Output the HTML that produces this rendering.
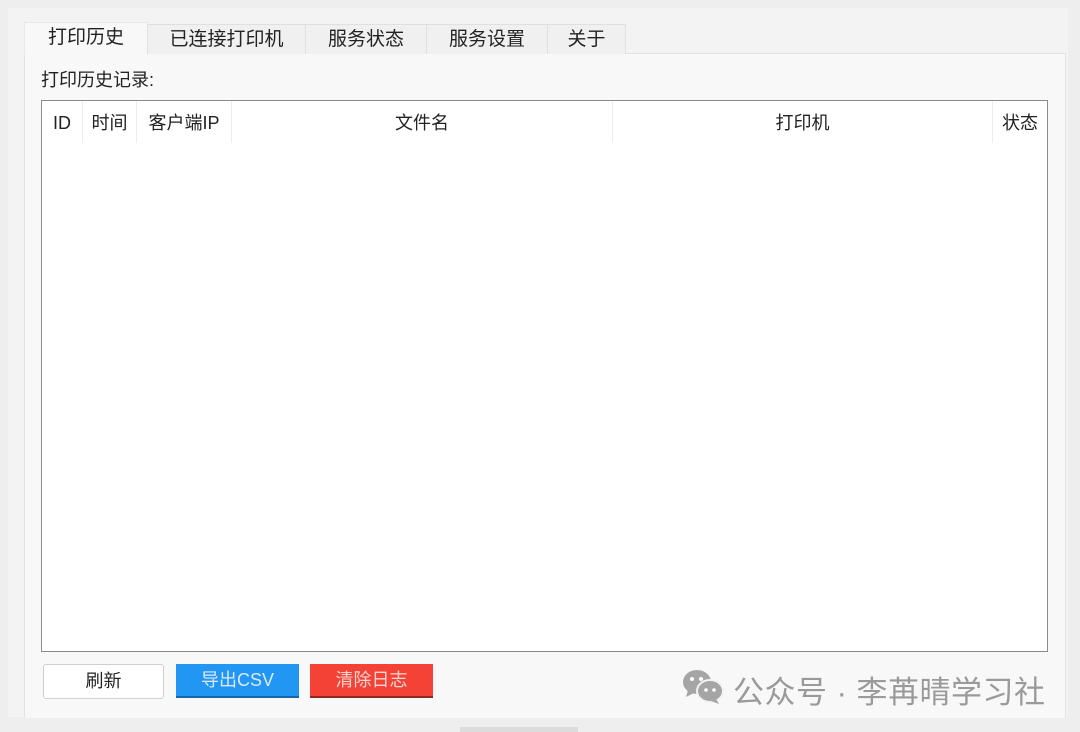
<!DOCTYPE html>
<html><head><meta charset="utf-8"><style>
body{margin:0;width:1080px;height:732px;background:#eeeeee;font-family:"Liberation Sans","Noto Sans CJK SC",sans-serif;position:relative;overflow:hidden;color:#111}
.abs{position:absolute}
.panel{left:8px;top:8px;width:1060px;height:709px;background:#f3f3f3}
.page{left:24px;top:53px;width:1040px;height:664px;background:#f8f8f8;border:1px solid #e2e2e2;border-bottom:none}
.tab{top:24px;height:29px;background:#f0f0f0;border:1px solid #e0e0e0;border-bottom:none;font-size:19px;line-height:29px;text-align:center;color:#222}
.tbl{left:41px;top:100px;width:1005px;height:550px;background:#fff;border:1px solid #8a8a8a}
.th{top:0;height:42px;line-height:44px;font-size:18px;text-align:center;border-right:1px solid #ececec;color:#222}
.btn{top:664px;height:33px;font-size:18px;line-height:33px;text-align:center}
</style></head><body>
<div class="abs panel"></div>
<div class="abs page"></div>
<div class="abs tab" style="left:24px;width:122px;background:#f8f8f8;border-color:#e8e8e8;top:22px;height:32px">打印历史</div>
<div class="abs tab" style="left:147px;width:157px">已连接打印机</div>
<div class="abs tab" style="left:305px;width:120px">服务状态</div>
<div class="abs tab" style="left:426px;width:120px">服务设置</div>
<div class="abs tab" style="left:547px;width:77px">关于</div>
<div class="abs" style="left:41px;top:66px;font-size:18px;color:#222">打印历史记录:</div>
<div class="abs tbl">
<div class="abs th" style="left:0;width:40px">ID</div>
<div class="abs th" style="left:41px;width:53px">时间</div>
<div class="abs th" style="left:95px;width:94px">客户端IP</div>
<div class="abs th" style="left:190px;width:380px">文件名</div>
<div class="abs th" style="left:571px;width:379px">打印机</div>
<div class="abs th" style="left:951px;width:54px;border:none">状态</div>
</div>
<div class="abs btn" style="left:43px;width:119px;background:#fff;border:1px solid #cfcfcf;border-radius:3px;color:#222">刷新</div>
<div class="abs btn" style="left:176px;width:123px;background:#2196f3;color:#dbe9ff;border-bottom:2px solid #1767a8;height:32px">导出CSV</div>
<div class="abs btn" style="left:310px;width:123px;background:#f44336;color:#ffd6d2;border-bottom:2px solid #8a2a22;height:32px">清除日志</div>
<svg class="abs" style="left:682px;top:668px" width="42" height="38" viewBox="0 0 42 38">
<ellipse cx="15" cy="14" rx="14" ry="12" fill="#a5a5a5"/><path d="M6 22l-2 7 8-4z" fill="#a5a5a5"/>
<ellipse cx="28" cy="23" rx="13" ry="11" fill="#a5a5a5" stroke="#f3f3f3" stroke-width="2"/><path d="M34 31l3 5-8-3z" fill="#a5a5a5"/>
<circle cx="10" cy="11" r="2" fill="#fff"/><circle cx="19" cy="11" r="2" fill="#fff"/>
<circle cx="24" cy="22" r="1.8" fill="#fff"/><circle cx="32" cy="22" r="1.8" fill="#fff"/></svg>
<div class="abs" style="left:733px;top:667px;font-size:31px;color:#9a9a9a;white-space:nowrap;letter-spacing:0.5px">公众号 · 李苒晴学习社</div>
<div class="abs" style="left:460px;top:727px;width:118px;height:5px;background:#dcdcdc"></div>
</body></html>
